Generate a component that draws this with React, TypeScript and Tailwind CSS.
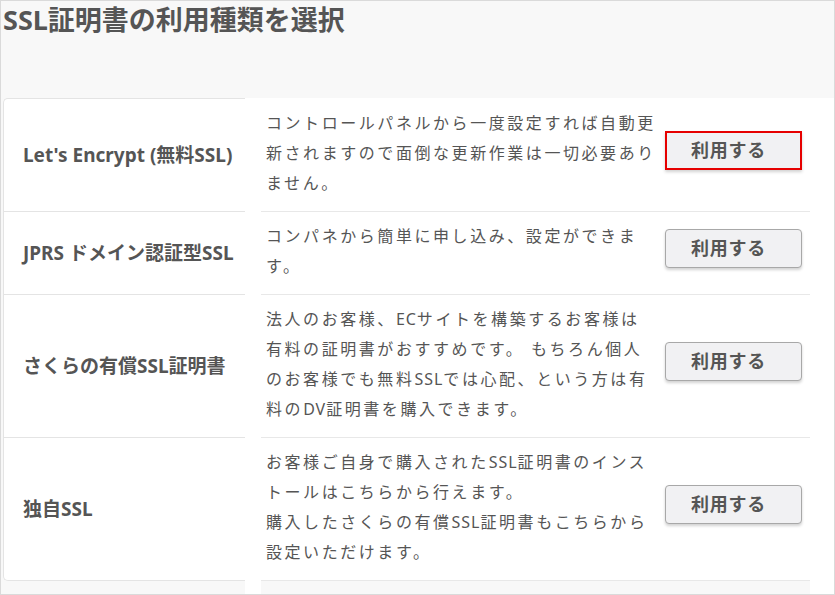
const font = {
  fontFamily: '"Noto Sans", "Noto Sans CJK JP", sans-serif',
};

// latin runs are set without the wide tracking used for kana/kanji
function L({ children }: { children: React.ReactNode }) {
  return <span className="tracking-[0.06em]">{children}</span>;
}

type Plan = {
  name: string;
  desc: React.ReactNode;
};

const plans: Plan[] = [
  {
    name: "Let's Encrypt (無料SSL)",
    desc: "コントロールパネルから一度設定すれば自動更新されますので面倒な更新作業は一切必要ありません。",
  },
  {
    name: "JPRS ドメイン認証型SSL",
    desc: "コンパネから簡単に申し込み、設定ができます。",
  },
  {
    name: "さくらの有償SSL証明書",
    desc: (
      <>
        法人のお客様、<L>EC</L>サイトを構築するお客様は
        <br />
        有料の証明書がおすすめです。 もちろん個人
        <br />
        のお客様でも無料<L>SSL</L>では心配、という方は有
        <br />
        料の<L>DV</L>証明書を購入できます。
      </>
    ),
  },
  {
    name: "独自SSL",
    desc: (
      <>
        お客様ご自身で購入された<L>SSL</L>証明書のインス
        <br />
        トールはこちらから行えます。
        <br />
        購入したさくらの有償<L>SSL</L>証明書もこちらから
        <br />
        設定いただけます。
      </>
    ),
  },
];

export default function App() {
  return (
    <div
      className="w-[835px] h-[595px] border border-[#dadada] bg-[#f8f8f8] flex flex-col overflow-hidden text-[#555]"
      style={font}
    >
      <h1 className="h-[97px] shrink-0 pl-[2px] text-[27px] leading-[38px] font-bold">
        SSL証明書の利用種類を選択
      </h1>

      <div className="flex flex-col">
        {plans.map((plan, i) => {
          const first = i === 0;
          const last = i === plans.length - 1;
          return (
            <div key={i} className="flex">
              <div className="w-[2px] shrink-0" />
              <div
                className={
                  "w-[242px] shrink-0 bg-white border-l border-b border-[#e4e4e4] flex items-center pl-[19px] text-[19px] font-bold whitespace-nowrap overflow-hidden" +
                  (first ? " border-t rounded-tl-[5px]" : "") +
                  (last ? " rounded-bl-[5px]" : "")
                }
              >
                {plan.name}
              </div>
              <div className="w-[16px] shrink-0 bg-white" />
              <div
                className={
                  "w-[549px] shrink-0 bg-white border-b border-[#e8e8e8] flex" +
                  (first ? " pt-px" : "")
                }
              >
                <p className="w-[404px] shrink-0 pl-[5px] pt-[9px] pb-[13px] text-[16px] leading-[30px] tracking-[0.16em]">
                  {plan.desc}
                </p>
                <div className="flex-1 flex items-center justify-end pr-[8px]">
                  <button
                    className={
                      "w-[137px] h-[39px] mb-[9px] pr-[10px] bg-[#f1f1f3] text-[18px] font-bold tracking-[0.04em] text-[#555] shadow-[0_2px_3px_rgba(0,0,0,0.18)] " +
                      (first
                        ? "border-2 border-[#e60000]"
                        : "border border-[#a8a8a8] rounded-[4px]")
                    }
                  >
                    利用する
                  </button>
                </div>
              </div>
              <div className="flex-1 bg-white" />
            </div>
          );
        })}
        <div className="flex h-[14px]">
          <div className="w-[244px] shrink-0" />
          <div className="w-[16px] shrink-0 bg-white" />
          <div className="w-[549px] shrink-0" />
          <div className="flex-1 bg-white" />
        </div>
      </div>
    </div>
  );
}
